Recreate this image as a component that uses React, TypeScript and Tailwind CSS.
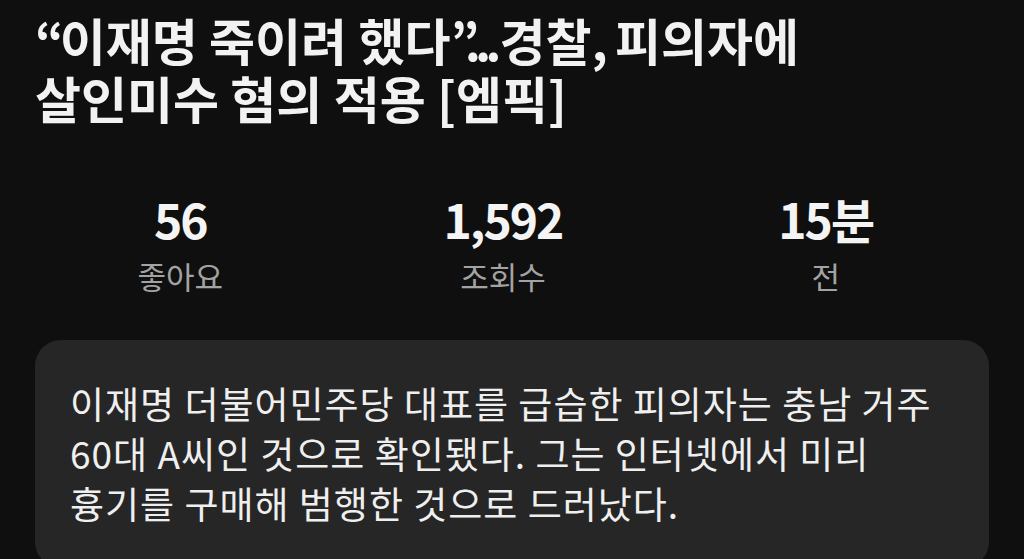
export default function App() {
  const stats = [
    { value: "56", label: "좋아요" },
    { value: "1,592", label: "조회수" },
    { value: "15분", label: "전" },
  ];

  return (
    <div
      className="min-h-[559px] w-full overflow-hidden bg-[#0f0f0f] px-[35px] pt-[10px] text-white"
      style={{ fontFamily: '"Noto Sans CJK KR", "Noto Sans", sans-serif' }}
    >
      {/* Headline */}
      <h1 className="text-[50px] font-bold leading-[58px] text-[#f2f2f2]">
        <span className="tracking-[-4px]">“</span>이재명 죽이려 했다
        <span className="tracking-[-6px]">”...</span>
        <span className="ml-[4px]">경찰</span>
        <span className="tracking-[-4px]">,</span> 피의자에
        <br />
        살인미수 혐의 적용 [엠픽]
      </h1>

      {/* Stats */}
      <div className="ml-[-16px] mr-[2px] mt-[66px] grid grid-cols-3">
        {stats.map((s) => (
          <div key={s.label} className="flex flex-col items-center">
            <span className="text-[48px] font-bold leading-[52px] tracking-[-2px] text-[#f4f4f4]">
              {s.value}
            </span>
            <span className="mt-[12px] text-[31px] leading-[40px] text-[#a3a3a3]">
              {s.label}
            </span>
          </div>
        ))}
      </div>

      {/* Summary card */}
      <div className="mt-[44px] rounded-[26px] bg-[#262626] px-[35px] pt-[38px] pb-[40px]">
        <p className="text-[37px] leading-[50px] tracking-[1px] text-[#efefef]">
          이재명 더불어민주당 대표를 급습한 피의자는 충남 거주
          <br />
          60대 A씨인 것으로 확인됐다. 그는 인터넷에서 미리
          <br />
          흉기를 구매해 범행한 것으로 드러났다.
        </p>
      </div>
    </div>
  );
}
